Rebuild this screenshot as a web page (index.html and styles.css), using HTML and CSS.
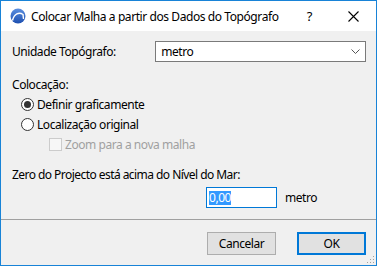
FILE: index.html
```html
<!DOCTYPE html>
<html lang="pt">
<head>
<meta charset="utf-8">
<title>Colocar Malha a partir dos Dados do Topógrafo</title>
<link rel="stylesheet" href="styles.css">
</head>
<body>
<div class="window">
    <div class="titlebar">
        <svg class="app-icon" width="16" height="16" viewBox="0 0 16 16">
            <defs>
                <linearGradient id="ag" x1="0" y1="0" x2="0" y2="1">
                    <stop offset="0" stop-color="#5b8fe0"/>
                    <stop offset="1" stop-color="#1d4fb0"/>
                </linearGradient>
            </defs>
            <circle cx="8" cy="8" r="7.5" fill="url(#ag)"/>
            <path d="M2.5 12.5 C4 6 9 3.5 13 6.5 L13.5 11" fill="none" stroke="#fff" stroke-width="1.4"/>
        </svg>
        <span class="title">Colocar Malha a partir dos Dados do Topógrafo</span>
        <span class="help">?</span>
        <svg class="close" width="11" height="11" viewBox="0 0 11 11">
            <path d="M0.5 0.5 L10.5 10.5 M10.5 0.5 L0.5 10.5" stroke="#000" stroke-width="1.1"/>
        </svg>
    </div>

    <div class="body">
        <div class="row">
            <span class="label unit-label">Unidade Topógrafo:</span>
            <div class="select">
                <span>metro</span>
                <svg width="9" height="5" viewBox="0 0 9 5"><path d="M0.5 0.5 L4.5 4.5 L8.5 0.5" fill="none" stroke="#555" stroke-width="1"/></svg>
            </div>
        </div>

        <div class="group">
            <div class="label">Colocação:</div>
            <label class="option"><span class="radio checked"></span>Definir graficamente</label>
            <label class="option"><span class="radio"></span>Localização original</label>
            <label class="option sub disabled"><span class="check"></span>Zoom para a nova malha</label>
        </div>

        <div class="group level">
            <div class="label level-label">Zero do Projecto está acima do Nível do Mar:</div>
            <div class="value-row">
                <div class="input"><span class="sel">0,00</span></div>
                <span>metro</span>
            </div>
        </div>
    </div>

    <div class="footer">
        <button class="btn">Cancelar</button>
        <button class="btn default">OK</button>
        <span class="grip"></span>
    </div>
</div>
</body>
</html>
```

FILE: styles.css
```css
html, body { margin: 0; padding: 0; }
body { font: 12px "Noto Sans", "Liberation Sans", sans-serif; letter-spacing: -0.45px; color: #000; background: #fff; }

.window {
    width: 377px;
    height: 266px;
    box-sizing: border-box;
    border: 1px solid #1883d7;
    background: #f0f0f0;
    display: flex;
    flex-direction: column;
    position: relative;
}

.titlebar {
    height: 30px;
    background: #fff;
    display: flex;
    align-items: center;
    flex: none;
}
.app-icon { margin: 0 5px 0 9px; }
.title { letter-spacing: -0.42px; }
.help { font-size: 13px; margin-left: auto; margin-right: 36px; }
.close { margin-right: 17px; }

.body { padding: 10px 10px 0 11px; flex: 1; }

.row { display: flex; align-items: center; }
.unit-label { width: 144px; }
.select {
    width: 200px;
    height: 19px;
    border: 1px solid #7a7a7a;
    background: #fff;
    display: flex;
    align-items: center;
    justify-content: space-between;
    padding: 0 5px 0 5px;
}

.group { margin-top: 15px; }
.group .label { line-height: 16px; margin-bottom: 1px; }
.level-label { letter-spacing: -0.55px; }
.option { display: flex; align-items: center; height: 20px; margin-left: 9px; }
.option.sub { margin-left: 37px; }
.disabled { color: #a0a0a0; }

.radio {
    width: 11px;
    height: 11px;
    border: 1px solid #333;
    border-radius: 50%;
    background: #fff;
    margin-right: 3px;
    display: flex;
    align-items: center;
    justify-content: center;
}
.radio.checked::after {
    content: "";
    width: 7px;
    height: 7px;
    border-radius: 50%;
    background: #333;
}
.check {
    width: 11px;
    height: 11px;
    border: 1px solid #cccccc;
    background: #f7f7f7;
    margin-right: 3px;
}

.level { margin-top: 13px; }
.value-row { display: flex; align-items: center; margin: 4px 0 0 194px; }
.input {
    width: 67px;
    height: 19px;
    border: 1px solid #0078d7;
    background: #fff;
    display: flex;
    align-items: center;
    padding-left: 2px;
    margin-right: 8px;
}
.sel { background: #3399ff; color: #fff; line-height: 14px; }

.footer {
    border-top: 1px solid #a0a0a0;
    display: flex;
    align-items: flex-start;
    justify-content: flex-end;
    padding: 12px 10px 0 0;
    box-sizing: border-box;
    flex: none;
    height: 46px;
}
.btn {
    font: inherit;
    letter-spacing: inherit;
    color: #000;
    width: 69px;
    height: 23px;
    border: 1px solid #adadad;
    background: #e1e1e1;
    margin-left: 21px;
    padding: 0;
}
.btn.default { border: 2px solid #0078d7; }
.grip {
    position: absolute;
    right: 2px;
    bottom: 2px;
    width: 8px;
    height: 8px;
    background:
        radial-gradient(circle, #a0a0a0 1px, transparent 1px) 0 0 / 3px 3px;
    clip-path: polygon(100% 0, 100% 100%, 0 100%);
}
```
